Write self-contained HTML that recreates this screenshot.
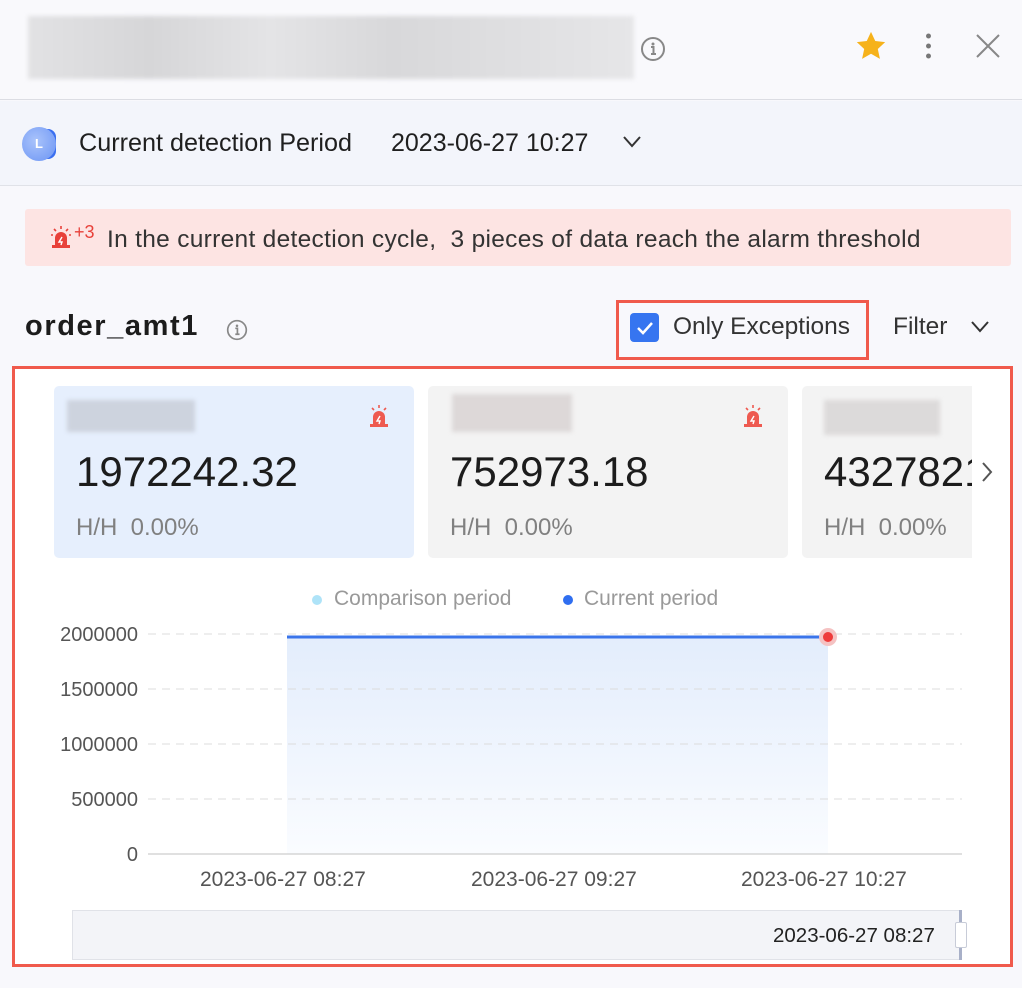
<!DOCTYPE html>
<html><head><meta charset="utf-8"><style>
*{margin:0;padding:0;box-sizing:border-box}
body{width:1022px;height:988px;background:#f8f8fc;font-family:"Liberation Sans",sans-serif;position:relative;overflow:hidden;color:#222}
.a{position:absolute}
</style></head><body>
<div class="a" style="left:0;top:0;width:1022px;height:100px;background:#f9f9fc;border-bottom:1px solid #dcdde3"></div>
<div class="a" style="left:28px;top:16px;width:606px;height:63px;background:linear-gradient(90deg,#e2e2e4,#d6d6d8 20%,#e4e4e6 40%,#d8d8da 60%,#e6e6e8);filter:blur(2px)"></div>
<svg class="a" style="left:640px;top:36px" width="26" height="26" viewBox="0 0 26 26"><circle cx="13" cy="13" r="11" fill="none" stroke="#888" stroke-width="2"/><circle cx="13" cy="8" r="1.5" fill="#888"/><path d="M11 11h2.5v7M11 18h5" stroke="#888" stroke-width="2" fill="none"/></svg>
<svg class="a" style="left:853px;top:29px" width="36" height="34" viewBox="0 0 24 24"><path d="M12 2l3 6.5 7 .8-5.2 4.8 1.5 7-6.3-3.6-6.3 3.6 1.5-7L2 9.3l7-.8z" fill="#f6b21b"/></svg>
<div class="a" style="left:926px;top:31px;width:5px;height:30px;background:radial-gradient(circle,#777 2.2px,transparent 2.7px) 0 0/5px 10px"></div>
<svg class="a" style="left:975px;top:33px" width="26" height="26"><path d="M2 2l22 22M24 2L2 24" stroke="#888" stroke-width="2"/></svg>
<div class="a" style="left:0;top:101px;width:1022px;height:85px;background:#f3f5fb;border-bottom:1px solid #e0e2e8"></div>
<div class="a" style="left:22px;top:127px;width:40px;height:36px;"><div class="a" style="left:14px;top:2px;width:20px;height:30px;background:#3a6ff0;border-radius:3px 8px 8px 3px"></div><div class="a" style="left:0;top:0;width:34px;height:34px;border-radius:50%;background:radial-gradient(circle at 40% 40%,#a9c3fb,#6b94f4);color:#fff;font-size:13px;font-weight:bold;text-align:center;line-height:34px">L</div></div>
<div class="a" style="left:79px;top:129px;font-size:25.2px;color:#1f1f1f">Current detection Period</div>
<div class="a" style="left:391px;top:129px;font-size:25px;color:#1f1f1f">2023-06-27 10:27</div>
<svg class="a" style="left:622px;top:135px" width="20" height="14"><path d="M2 2l8 9 8-9" stroke="#333" stroke-width="2" fill="none"/></svg>
<div class="a" style="left:25px;top:209px;width:986px;height:57px;background:#fde4e3;border-radius:3px"></div>
<svg class="a" style="left:50px;top:225px" width="22" height="24" viewBox="0 0 22 24"><path d="M5 22V13a6 6 0 0112 0v9z" fill="#e8413a"/><rect x="2" y="20" width="18" height="3" fill="#e8413a"/><path d="M11 1v3M4 4l2 2M18 4l-2 2M1 10h2M19 10h2" stroke="#e8413a" stroke-width="1.6"/><path d="M12 12l-3 5h3l-1 3" stroke="#fff" stroke-width="1.4" fill="none"/></svg>
<div class="a" style="left:74px;top:222px;font-size:18px;color:#e8413a">+3</div>
<div class="a" style="left:107px;top:226px;font-size:24.5px;letter-spacing:0.3px;color:#333;white-space:nowrap">In the current detection cycle,&nbsp;&nbsp;3 pieces of data reach the alarm threshold</div>
<div class="a" style="left:25px;top:310px;font-size:29px;letter-spacing:1.6px;font-weight:bold;color:#1c1c1c">order_amt1</div>
<svg class="a" style="left:226px;top:319px" width="22" height="22" viewBox="0 0 26 26"><circle cx="13" cy="13" r="11" fill="none" stroke="#888" stroke-width="2"/><circle cx="13" cy="8" r="1.5" fill="#888"/><path d="M11 11h2.5v7M11 18h5" stroke="#888" stroke-width="2" fill="none"/></svg>
<div class="a" style="left:616px;top:300px;width:253px;height:60px;border:3px solid #f05a4c"></div>
<div class="a" style="left:630px;top:313px;width:29px;height:29px;background:#3675f0;border-radius:4px"><svg width="29" height="29"><path d="M8 15l5 5 9-10" stroke="#fff" stroke-width="2.5" fill="none"/></svg></div>
<div class="a" style="left:673px;top:313px;font-size:24.5px;color:#333">Only Exceptions</div>
<div class="a" style="left:893px;top:313px;font-size:24.5px;color:#333">Filter</div>
<svg class="a" style="left:970px;top:320px" width="20" height="14"><path d="M2 2l8 9 8-9" stroke="#333" stroke-width="2" fill="none"/></svg>
<div class="a" style="left:12px;top:366px;width:1001px;height:601px;border:3px solid #f05a4c;background:#fff"></div>
<div class="a" style="left:54px;top:386px;width:360px;height:172px;background:#e6effd;border-radius:5px"></div>
<div class="a" style="left:428px;top:386px;width:360px;height:172px;background:#f3f3f3;border-radius:5px"></div>
<div class="a" style="left:802px;top:386px;width:170px;height:172px;background:#f3f3f3;border-radius:5px 0 0 5px"></div>
<div class="a" style="left:67px;top:400px;width:128px;height:32px;background:#cdd3de;filter:blur(2px)"></div>
<div class="a" style="left:452px;top:394px;width:120px;height:38px;background:#ddd8d8;filter:blur(2px)"></div>
<div class="a" style="left:824px;top:400px;width:116px;height:35px;background:#dcdada;filter:blur(2px)"></div>
<svg class="a" style="left:368px;top:404px" width="22" height="24" viewBox="0 0 22 24"><path d="M5 22V13a6 6 0 0112 0v9z" fill="#ee5a50"/><rect x="2" y="20" width="18" height="3" fill="#ee5a50"/><path d="M11 1v3M4 4l2 2M18 4l-2 2" stroke="#ee5a50" stroke-width="1.6"/><path d="M12 12l-3 5h3l-1 3" stroke="#fff" stroke-width="1.4" fill="none"/></svg>
<svg class="a" style="left:742px;top:404px" width="22" height="24" viewBox="0 0 22 24"><path d="M5 22V13a6 6 0 0112 0v9z" fill="#ee5a50"/><rect x="2" y="20" width="18" height="3" fill="#ee5a50"/><path d="M11 1v3M4 4l2 2M18 4l-2 2" stroke="#ee5a50" stroke-width="1.6"/><path d="M12 12l-3 5h3l-1 3" stroke="#fff" stroke-width="1.4" fill="none"/></svg>
<div class="a" style="left:76px;top:448px;font-size:42px;color:#1c1c1c">1972242.32</div>
<div class="a" style="left:450px;top:448px;font-size:42px;color:#1c1c1c">752973.18</div>
<div class="a" style="left:824px;top:448px;width:148px;overflow:hidden;white-space:nowrap;font-size:42px;color:#1c1c1c">4327821</div>
<div class="a" style="left:76px;top:514px;font-size:24px;color:#808080">H/H&nbsp;&nbsp;0.00%</div>
<div class="a" style="left:450px;top:514px;font-size:24px;color:#808080">H/H&nbsp;&nbsp;0.00%</div>
<div class="a" style="left:824px;top:514px;font-size:24px;color:#808080">H/H&nbsp;&nbsp;0.00%</div>
<svg class="a" style="left:980px;top:460px" width="14" height="24"><path d="M3 3l8 9-8 9" stroke="#555" stroke-width="2" fill="none"/></svg>
<div class="a" style="left:312px;top:595px;width:10px;height:10px;border-radius:50%;background:#aee3f8"></div>
<div class="a" style="left:334px;top:587px;font-size:21px;color:#999">Comparison period</div>
<div class="a" style="left:563px;top:595px;width:10px;height:10px;border-radius:50%;background:#2f6ef0"></div>
<div class="a" style="left:584px;top:587px;font-size:21px;color:#999">Current period</div>
<svg class="a" style="left:0;top:620px" width="1022" height="250">
<defs><linearGradient id="g" x1="0" y1="0" x2="0" y2="1"><stop offset="0" stop-color="#e3edfc"/><stop offset="1" stop-color="#fafcff"/></linearGradient></defs>
<rect x="287" y="17" width="541" height="217" fill="url(#g)"/>
<g stroke="#dcdcdc" stroke-dasharray="8 6"><path d="M148 14H962M148 69H962M148 124H962M148 179H962"/></g>
<path d="M148 234H962" stroke="#d5d5d5" stroke-width="1.5"/>
<path d="M287 17H828" stroke="#3a74ea" stroke-width="3"/>
<circle cx="828" cy="17" r="9" fill="#f5c2c2"/><circle cx="828" cy="17" r="5" fill="#ee3b3b"/>
<g font-family="Liberation Sans" font-size="20" fill="#555" text-anchor="end"><text x="138" y="21">2000000</text><text x="138" y="76">1500000</text><text x="138" y="131">1000000</text><text x="138" y="186">500000</text><text x="138" y="241">0</text></g>
</svg>
<div class="a" style="left:200px;top:868px;font-size:21px;color:#555">2023-06-27 08:27</div>
<div class="a" style="left:471px;top:868px;font-size:21px;color:#555">2023-06-27 09:27</div>
<div class="a" style="left:741px;top:868px;font-size:21px;color:#555">2023-06-27 10:27</div>
<div class="a" style="left:72px;top:910px;width:890px;height:50px;background:#f3f4f8;border:1px solid #e0e2e8"></div>
<div class="a" style="left:773px;top:924px;font-size:20.5px;color:#222">2023-06-27 08:27</div>
<div class="a" style="left:959px;top:910px;width:3px;height:50px;background:#a8b0c8"></div>
<div class="a" style="left:955px;top:922px;width:12px;height:26px;background:#fff;border:1px solid #c8ccd8;border-radius:2px"></div>
</body></html>
